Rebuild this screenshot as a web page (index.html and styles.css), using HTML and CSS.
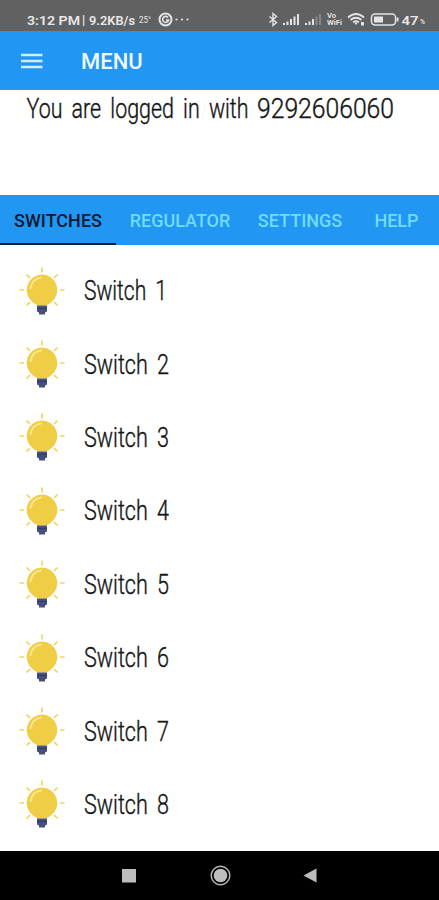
FILE: index.html
```
<!DOCTYPE html>
<html lang="en">
<head>
  <meta charset="UTF-8">
  <meta name="viewport" content="width=device-width, initial-scale=1.0">
  <title>Menu</title>
  <link rel="stylesheet" href="styles.css">
</head>
<body>
  <div class="status">
    <svg width="439" height="31" viewBox="0 0 439 31">
      <g class="status-text">
        <text x="27" y="24.5" textLength="53" lengthAdjust="spacingAndGlyphs">3:12 PM</text>
        <text x="82" y="24">|</text>
        <text x="89" y="24.5" textLength="46" lengthAdjust="spacingAndGlyphs">9.2KB/s</text>
        <text class="tiny" x="139" y="23" textLength="12" lengthAdjust="spacingAndGlyphs">25°</text>
        <text x="401.5" y="24.5" textLength="17" lengthAdjust="spacingAndGlyphs">47</text>
        <text class="wifi-label" x="327" y="17.5">Vo</text>
        <text class="wifi-label" x="327" y="24.5" textLength="15" lengthAdjust="spacingAndGlyphs">WiFi</text>
        <text class="wifi-label" x="420" y="24" textLength="5" lengthAdjust="spacingAndGlyphs">%</text>
      </g>
      <g fill="none" stroke="#e4e4e4">
        <circle cx="165.5" cy="19.5" r="6" stroke-width="2"/>
        <path d="M168 17.5a3 3 0 1 0 .6 2.5H166" stroke-width="1.6"/>
        <path d="M269.5 16.5l7 6-3.5 3v-12l3.5 3-7 6" stroke-width="1.4"/>
        <path d="M348 17.5q8-7 16 0M350.5 20q5.5-4.5 11 0M353 22.3q3-2.3 6 0" stroke-width="1.7"/>
        <rect x="371.5" y="14" width="24" height="11" rx="3.5" stroke-width="1.5"/>
      </g>
      <g fill="#e4e4e4">
        <circle cx="176.5" cy="19.5" r="1.1"/>
        <circle cx="182" cy="19.5" r="1.1"/>
        <circle cx="187.5" cy="19.5" r="1.1"/>
        <path d="M283 23h2v2h-2zM286.5 21.5h2v3.5h-2zM290 19h2v6h-2zM293.5 16.5h2v8.5h-2zM297 14h2v11h-2z"/>
        <path d="M305 23h2v2h-2zM308.5 21.5h2v3.5h-2zM312 19h2v6h-2z"/>
        <path d="M315.5 16.5h2v8.5h-2zM319 14h2v11h-2z" opacity=".3"/>
        <path d="M354 22.5h4l-2 2.5zM361 22h3v3.5h-3z"/>
        <rect x="374" y="16.5" width="9" height="6"/>
        <rect x="396.5" y="17.5" width="2" height="4"/>
      </g>
    </svg>
  </div>

  <header class="appbar">
    <svg class="burger" width="22" height="16" viewBox="0 0 22 16">
      <path d="M0 2h21.5M0 8h21.5M0 14h21.5" stroke="#d5ecfd" stroke-width="2.5"/>
    </svg>
    <h1>MENU</h1>
  </header>

  <section class="account">
    <svg class="label" width="439" height="40">
      <text x="26.5" y="28.3" textLength="222" lengthAdjust="spacingAndGlyphs">You are logged in with</text>
      <text x="257" y="28.3" textLength="137" lengthAdjust="spacingAndGlyphs">9292606060</text>
    </svg>
  </section>

  <nav class="tabs">
    <a class="tab active">SWITCHES</a>
    <a class="tab regulator">REGULATOR</a>
    <a class="tab settings">SETTINGS</a>
    <a class="tab help">HELP</a>
  </nav>

  <svg class="defs" width="0" height="0">
    <symbol id="bulb" viewBox="0 0 48 50">
      <path d="M24 1.500v5M8.500 8.500l3.500 3.500M39.500 8.500l-3.500 3.500M1.500 24h4.500M42 24h4.500M8.500 39.500l3.500-3.500M39.500 39.500l-3.500-3.500" stroke="#f2d45c" stroke-width="1.7" fill="none"/>
      <path d="M24 8.5a15.500 15.500 0 0 0-9 28q2 1.500 4.500 3h9q2.500-1.500 4.500-3a15.500 15.500 0 0 0-9-28z" fill="#efcd45"/>
      <path d="M12.500 22q1.500-9 10.500-10.500" stroke="#f8e690" stroke-width="2" stroke-linecap="round" fill="none"/>
      <path d="M19 39.500h10v6l-2 1v2h-6v-2l-2-1z" fill="#454f7c"/>
      <path d="M19 42.500h10" stroke="#303961"/>
    </symbol>
  </svg>
  <main class="switches" id="switches"></main>

  <footer class="navbar">
    <svg width="439" height="49" viewBox="0 0 439 49">
      <rect x="122" y="18" width="14" height="13.5" fill="#bdbdbd"/>
      <circle cx="220.500" cy="24.500" r="9.3" fill="none" stroke="#b5b5b5" stroke-width="1.5"/>
      <circle cx="220.500" cy="24.500" r="6.8" fill="#bdbdbd"/>
      <path d="M303.500 24.500l13-7v14z" fill="#bdbdbd"/>
    </svg>
  </footer>

  <script>
    const list = document.getElementById("switches");
    for (let i = 1; i <= 8; i++) {
      // the 1 is drawn narrower than the other digits
      const width = i === 1 ? 83 : 85;
      list.innerHTML += `
        <div class="switch">
          <svg class="bulb"><use href="#bulb"/></svg>
          <svg class="label" width="100" height="40">
            <text x="0" y="29" textLength="${width}" lengthAdjust="spacingAndGlyphs">Switch ${i}</text>
          </svg>
        </div>`;
    }
  </script>
</body>
</html>
```
FILE: styles.css
```
* { box-sizing: border-box; }
body { margin: 0; width: 439px; height: 900px; display: flex; flex-direction: column; overflow: hidden; background: #fff; font-family: Roboto, Arial, sans-serif; }
svg { display: block; flex: none; }
.status { height: 31px; background: #616161; }
.status-text { fill: #e8e8e8; font-size: 13px; font-weight: 600; }
.status-text .tiny { font-size: 9px; font-weight: 400; }
.status-text .wifi-label { font-size: 7.5px; }
.appbar { height: 59px; display: flex; align-items: center; padding-left: 21px; background: #2196f3; color: #f0f8ff; }
.appbar h1 { margin: 3px 0 0 38px; font-size: 22px; font-weight: 500; line-height: 24px; }
.account { height: 105px; }
.label { fill: #161616; font-size: 27px; font-weight: 300; word-spacing: 5px; stroke: #161616; stroke-width: 0.4px; }
.tabs { height: 50px; display: flex; background: #2196f3; color: #6fdcf8; font-size: 18px; font-weight: 500; line-height: 52px; }
.tab { flex: none; text-align: center; white-space: nowrap; }
.active { width: 116px; color: #101a30; border-bottom: 2px solid #101a35; }
.regulator { width: 128px; }
.settings { width: 112px; }
.help { width: 83px; padding-right: 2px; }
.defs { position: absolute; }
.switches { flex: 1; padding-top: 8px; }
.switch { height: 73.4px; display: flex; align-items: center; padding-left: 18px; }
.bulb { width: 48px; height: 50px; margin-top: 2px; }
.switch .label { margin: 3px 0 0 18px; }
.navbar { height: 49px; background: #000; }
```
